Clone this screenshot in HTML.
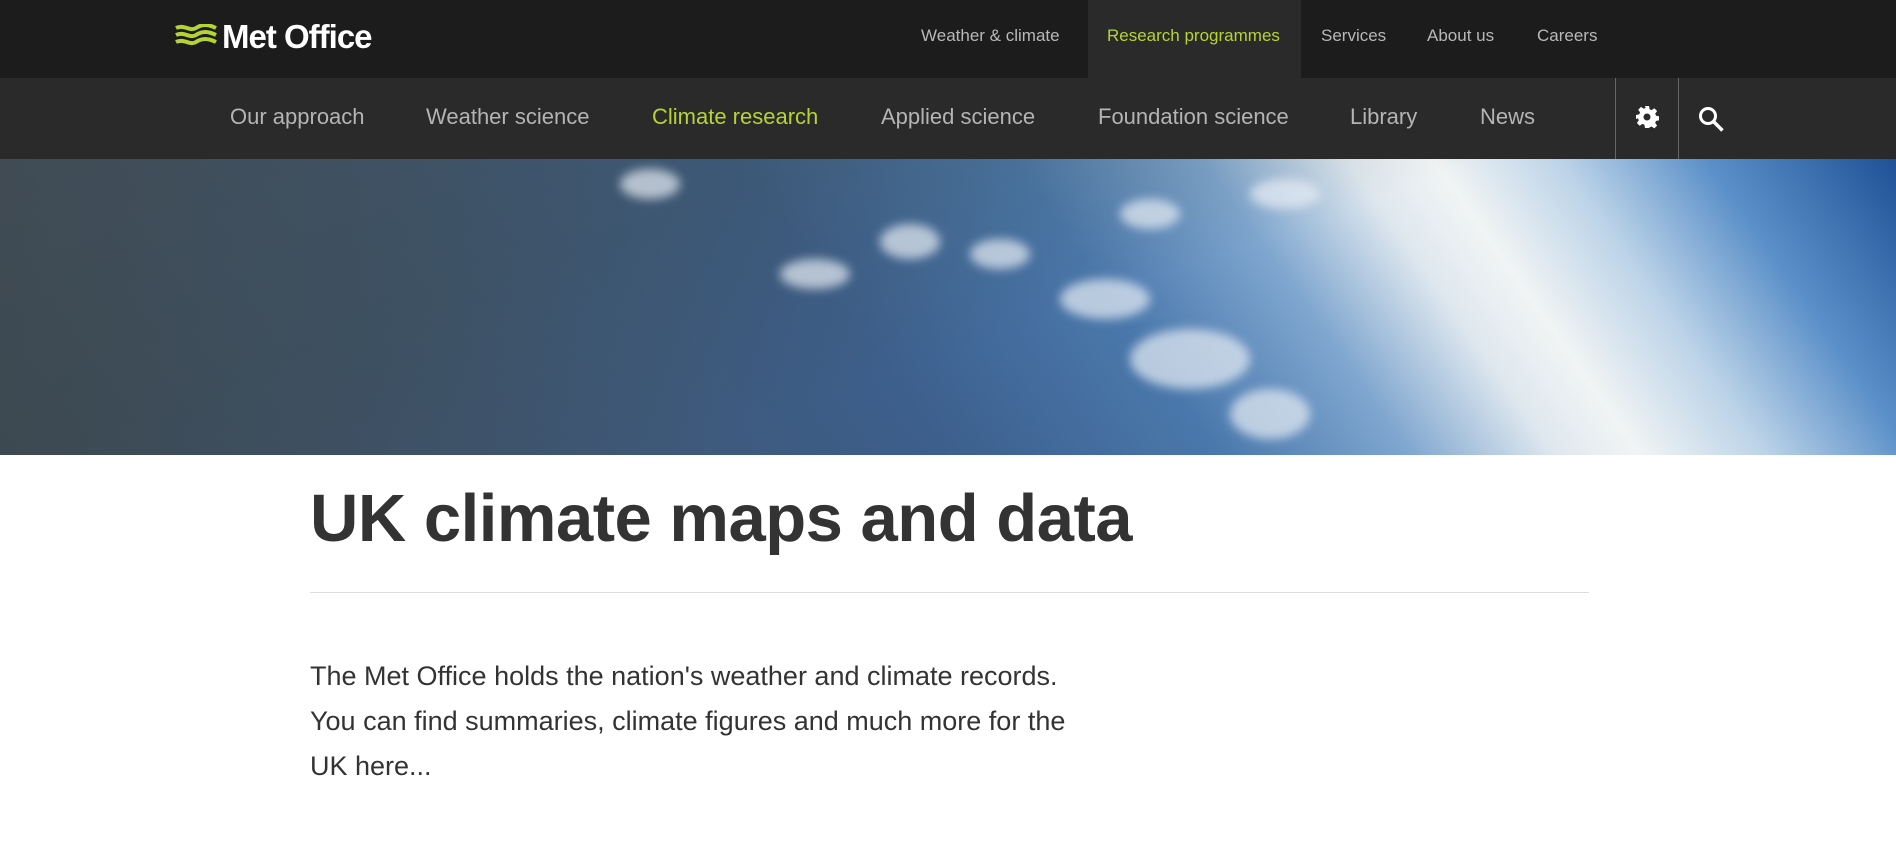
<!DOCTYPE html>
<html><head><meta charset="utf-8"><style>
*{margin:0;padding:0;box-sizing:border-box}
body{width:1896px;height:862px;overflow:hidden;background:#fff;font-family:"Liberation Sans",sans-serif;position:relative}
.a{position:absolute;white-space:nowrap}
#top{position:absolute;left:0;top:0;width:1896px;height:78px;background:#1c1c1c}
#act{position:absolute;left:1088px;top:0;width:213px;height:78px;background:#2a2a2a}
.t{font-size:17px;color:#b8b8b8;top:26px}
#nav{position:absolute;left:0;top:78px;width:1896px;height:81px;background:#2a2a2a}
.n{font-size:22px;color:#b4b4b4;top:104px}
.g{color:#b5d334}
.div{position:absolute;top:78px;width:1px;height:81px;background:#666}
#hero{position:absolute;left:0;top:159px;width:1896px;height:296px;overflow:hidden;
background:linear-gradient(55deg,#3d4a58 0%,#3e5570 25%,#3d5f8c 45%,#4a78ac 58%,#7fa6cf 67%,#dfe8ef 74%,#f1f4f4 78%,#bcd3e8 84%,#5a8fc8 91%,#1e5196 100%)}
#earth{position:absolute;left:0;top:0;width:1896px;height:296px;background:linear-gradient(160deg,rgba(70,70,60,.35) 0%,rgba(60,70,60,.25) 30%,rgba(0,0,0,0) 55%)}
.cl{position:absolute;background:#e8eef5;border-radius:50%;filter:blur(5px);opacity:.7}
h1{position:absolute;left:310px;top:480px;font-size:67px;font-weight:bold;color:#333;letter-spacing:-0.5px}
#rule{position:absolute;left:310px;top:592px;width:1279px;height:1px;background:#ddd}
p{position:absolute;left:310px;top:654px;width:770px;font-size:27px;line-height:45px;color:#333}
</style></head><body>
<div id="top"></div><div id="act"></div>
<svg class="a" style="left:175px;top:24px" width="42" height="26" viewBox="0 0 42 26"><g fill="none" stroke="#b5d334" stroke-width="4"><path d="M1 4c8-4 14 4 20 0s12-4 20 0"/><path d="M1 11c8-4 14 4 20 0s12-4 20 0"/><path d="M1 18c8-4 14 4 20 0s12-4 20 0"/></g></svg>
<div class="a" style="left:222px;top:18px;font-size:33px;font-weight:bold;color:#fff;letter-spacing:-1px">Met Office</div>
<div class="a t" style="left:921px">Weather &amp; climate</div>
<div class="a t g" style="left:1107px">Research programmes</div>
<div class="a t" style="left:1321px">Services</div>
<div class="a t" style="left:1427px">About us</div>
<div class="a t" style="left:1537px">Careers</div>
<div id="nav"></div>
<div class="a n" style="left:230px">Our approach</div>
<div class="a n" style="left:426px">Weather science</div>
<div class="a n g" style="left:652px">Climate research</div>
<div class="a n" style="left:881px">Applied science</div>
<div class="a n" style="left:1098px">Foundation science</div>
<div class="a n" style="left:1350px">Library</div>
<div class="a n" style="left:1480px">News</div>
<div class="div" style="left:1615px"></div><div class="div" style="left:1678px"></div>
<svg class="a" style="left:1635px;top:105px" width="24" height="24" viewBox="0 0 24 24"><path fill="#fff" d="M10 1h4l.6 3.2 2 .9 2.7-1.9 2.8 2.8-1.9 2.7.9 2 3.2.6v4l-3.2.6-.9 2 1.9 2.7-2.8 2.8-2.7-1.9-2 .9L14 23h-4l-.6-3.2-2-.9-2.7 1.9-2.8-2.8 1.9-2.7-.9-2L1 14v-4l3.2-.6.9-2L3.2 4.7 6 1.9l2.7 1.9 2-.9z"/><circle cx="12" cy="12" r="3.5" fill="#2a2a2a"/></svg>
<svg class="a" style="left:1698px;top:106px" width="28" height="28" viewBox="0 0 28 28"><circle cx="10" cy="10" r="7.5" fill="none" stroke="#fff" stroke-width="3"/><path d="M15.5 15.5l9 9" stroke="#fff" stroke-width="3.5"/></svg>
<div id="hero"><div id="earth"></div>
<div class="cl" style="left:620px;top:10px;width:60px;height:30px"></div>
<div class="cl" style="left:780px;top:100px;width:70px;height:30px"></div>
<div class="cl" style="left:880px;top:65px;width:60px;height:35px"></div>
<div class="cl" style="left:970px;top:80px;width:60px;height:30px"></div>
<div class="cl" style="left:1060px;top:120px;width:90px;height:40px"></div>
<div class="cl" style="left:1130px;top:170px;width:120px;height:60px"></div>
<div class="cl" style="left:1230px;top:230px;width:80px;height:50px"></div>
<div class="cl" style="left:1120px;top:40px;width:60px;height:30px"></div>
<div class="cl" style="left:1250px;top:20px;width:70px;height:30px"></div>
</div>
<h1>UK climate maps and data</h1>
<div id="rule"></div>
<p>The Met Office holds the nation's weather and climate records. You can find summaries, climate figures and much more for the UK here...</p>
</body></html>
